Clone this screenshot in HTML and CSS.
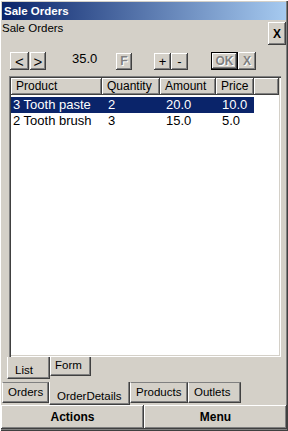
FILE: index.html
```html
<!DOCTYPE html>
<html>
<head>
<meta charset="utf-8">
<link rel="stylesheet" href="styles.css">
</head>
<body>
<div class="window">
  <div class="titlebar">Sale Orders</div>
  <div class="caption-row">
    <span class="caption">Sale Orders</span>
    <button class="btn close">X</button>
  </div>
  <div class="toolbar">
    <button class="btn nav">&lt;</button>
    <button class="btn nav next">&gt;</button>
    <span class="total">35.0</span>
    <button class="btn fbtn disabled">F</button>
    <button class="btn pm">+</button>
    <button class="btn pm minus">-</button>
    <button class="btn ok disabled">OK</button>
    <button class="btn xbtn disabled">X</button>
  </div>
  <div class="listview">
    <div class="lv-header">
      <div class="hcell c1">Product</div>
      <div class="hcell c2">Quantity</div>
      <div class="hcell c3">Amount</div>
      <div class="hcell c4">Price</div>
      <div class="hcell c5"></div>
    </div>
    <div class="lv-row selected">
      <div class="cell c1 first">3 Tooth paste</div>
      <div class="cell c2">2</div>
      <div class="cell c3">20.0</div>
      <div class="cell c4">10.0</div>
    </div>
    <div class="lv-row">
      <div class="cell c1 first">2 Tooth brush</div>
      <div class="cell c2">3</div>
      <div class="cell c3">15.0</div>
      <div class="cell c4">5.0</div>
    </div>
  </div>
  <div class="itabs">
    <div class="itab sel">List</div>
    <div class="itab">Form</div>
  </div>
  <div class="otabs">
    <div class="otab t-orders">Orders</div>
    <div class="otab sel t-details">OrderDetails</div>
    <div class="otab t-products">Products</div>
    <div class="otab t-outlets">Outlets</div>
  </div>
  <div class="actions">
    <button class="btn abtn">Actions</button>
    <button class="btn abtn">Menu</button>
  </div>
</div>
</body>
</html>
```

FILE: styles.css
```css
* { box-sizing: border-box; }
html, body { margin: 0; padding: 0; }
body {
  width: 288px;
  height: 431px;
  overflow: hidden;
  background: #d4d0c8;
  font-family: "Liberation Sans", Arial, sans-serif;
  color: #000;
}
.window {
  width: 288px;
  height: 431px;
  background: #d4d0c8;
  padding: 1px 1px 1px 1px;
  display: flex;
  flex-direction: column;
  box-shadow: inset 1px 1px #ffffff, inset -1px -1px #404040, inset -2px -2px #808080;
}
.titlebar {
  margin: 1px 1px 0 1px;
  height: 18px;
  background: linear-gradient(to right, #0a246a, #a6caf0);
  color: #fff;
  font-weight: bold;
  font-size: 11.5px;
  line-height: 18px;
  padding-left: 2px;
}
.btn {
  font-family: "Liberation Sans", Arial, sans-serif;
  background: #d4d0c8;
  border: none;
  margin: 0;
  padding: 0;
  color: #000;
  box-shadow: inset -1px -1px #404040, inset 1px 1px #ffffff, inset -2px -2px #808080, inset 2px 2px #d4d0c8;
  display: flex;
  align-items: center;
  justify-content: center;
}
.disabled {
  color: #808080;
  text-shadow: 1px 1px #ffffff;
}
.caption-row {
  display: flex;
  justify-content: space-between;
  align-items: flex-start;
  height: 31px;
}
.caption {
  font-size: 11.5px;
  line-height: 14px;
  padding-top: 1px;
  padding-left: 1px;
}
.close {
  margin-top: 2px;
  margin-right: 1px;
  width: 18px;
  height: 23px;
  font-weight: bold;
  font-size: 12px;
}
.toolbar {
  display: flex;
  align-items: center;
  height: 18px;
  margin-top: 1px;
  padding-left: 9px;
}
.nav {
  width: 19px;
  height: 18px;
  font-size: 15px;
}
.next { margin-left: 1px; width: 16px; }
.total {
  font-size: 13px;
  margin-left: 26px;
  width: 44px;
  align-self: flex-start;
  line-height: 14px;
}
.fbtn {
  width: 16px;
  height: 17px;
  font-weight: bold;
  font-size: 12px;
}
.pm {
  width: 17px;
  height: 17px;
  font-size: 13px;
  margin-left: 22px;
}
.pm.minus { margin-left: 0; }
.ok {
  margin-left: 23px;
  width: 27px;
  height: 18px;
  font-weight: bold;
  font-size: 12px;
  box-shadow: inset 1px 1px #000, inset -1px -1px #000, inset -2px -2px #404040, inset 2px 2px #ffffff, inset -3px -3px #808080;
}
.xbtn {
  width: 18px;
  height: 18px;
  font-weight: bold;
  font-size: 12px;
}
.listview {
  margin-top: 6px;
  margin-left: 8px;
  width: 272px;
  height: 281px;
  background: #fff;
  box-shadow: inset 1px 1px #808080, inset 2px 2px #404040, inset -1px -1px #ffffff, inset -2px -2px #d4d0c8;
  padding: 2px;
}
.lv-header {
  display: flex;
  height: 17px;
}
.hcell {
  background: #d4d0c8;
  box-shadow: inset -1px -1px #404040, inset 1px 1px #ffffff, inset -2px -2px #808080;
  font-size: 12px;
  line-height: 16px;
  padding-left: 5px;
  white-space: nowrap;
  overflow: hidden;
}
.c1 { width: 91px; }
.c2 { width: 58px; }
.c3 { width: 56px; }
.c4 { width: 38px; }
.c5 { width: 25px; }
.lv-row {
  display: flex;
  height: 16px;
  width: 243px;
  font-size: 13px;
  line-height: 16px;
}
.lv-row.selected {
  margin-top: 2px;
  background: #0a246a;
  color: #fff;
}
.cell {
  padding-left: 6px;
  white-space: nowrap;
}
.cell.first { padding-left: 2px; }
.itabs {
  display: flex;
  align-items: flex-start;
  margin-left: 6px;
  height: 25px;
}
.itab {
  font-size: 11.5px;
  height: 19px;
  width: 41px;
  padding-left: 4px;
  line-height: 17px;
  border-right: 1px solid #404040;
  border-bottom: 1px solid #404040;
  border-left: 1px solid #ffffff;
  box-shadow: inset -1px -1px #808080;
}
.itab.sel {
  width: 43px;
  height: 22px;
  padding-left: 7px;
  padding-top: 5px;
  border-left: 1px solid #ffffff;
}
.otabs {
  display: flex;
  align-items: flex-start;
  height: 23px;
}
.otab {
  font-size: 11.5px;
  height: 21px;
  line-height: 19px;
  padding-left: 5px;
  border-top: 1px solid #808080;
  border-left: 1px solid #ffffff;
  border-right: 1px solid #404040;
  border-bottom: 1px solid #404040;
  box-shadow: inset -1px -1px #808080;
  white-space: nowrap;
}
.t-orders { margin-left: 1px; width: 47px; }
.t-details {
  width: 81px;
  height: 23px;
  border-top: none;
  padding-left: 7px;
  padding-top: 6px;
  line-height: 16px;
}
.t-products { width: 58px; }
.t-outlets { width: 53px; }
.actions {
  display: flex;
  height: 24px;
}
.abtn {
  flex: 1;
  height: 24px;
  font-weight: bold;
  font-size: 12px;
}
```
